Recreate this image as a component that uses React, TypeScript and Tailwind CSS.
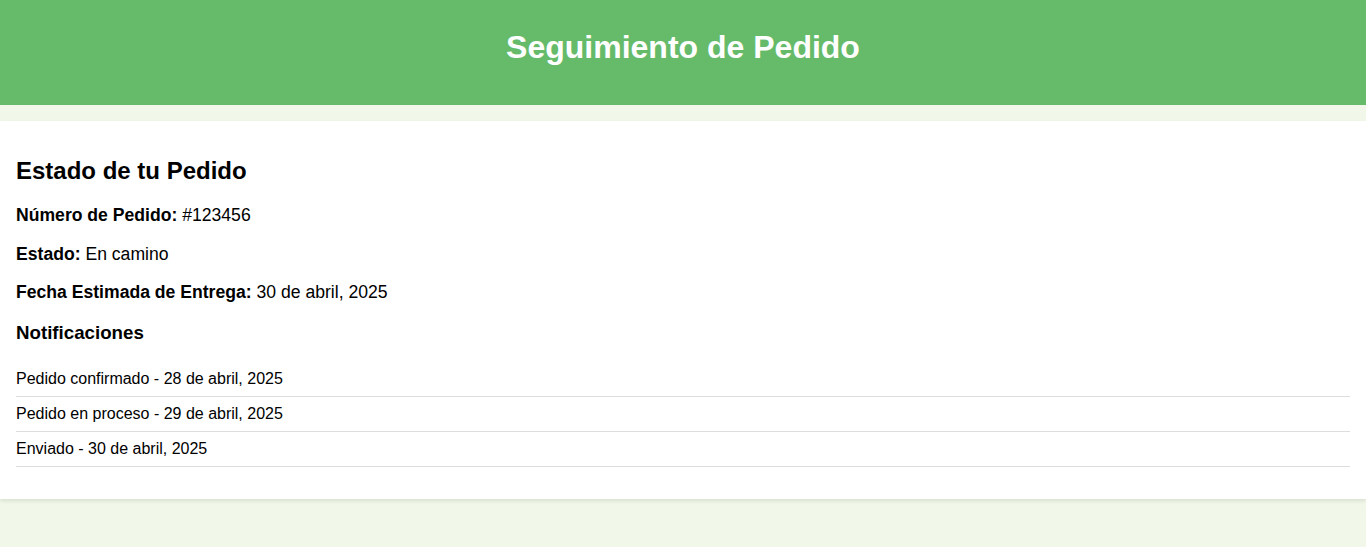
const notifications = [
  'Pedido confirmado - 28 de abril, 2025',
  'Pedido en proceso - 29 de abril, 2025',
  'Enviado - 30 de abril, 2025',
]

export default function App() {
  return (
    <div
      className="min-h-[547px] bg-[#f1f8e9] text-black"
      style={{ fontFamily: '"Liberation Sans", Arial, sans-serif' }}
    >
      {/* Header */}
      <header className="h-[105px] bg-[#66bb6a] pt-[29px] text-center">
        <h1 className="text-[32px] font-bold leading-[36.8px] text-white">
          Seguimiento de Pedido
        </h1>
      </header>

      {/* Order card */}
      <section className="mt-4 flex flex-col bg-white p-4 shadow-[0_2px_4px_rgba(0,0,0,0.1)]">
        <h2 className="mt-[20px] text-[24px] font-bold leading-[27.6px]">
          Estado de tu Pedido
        </h2>
        <p className="mt-[20.4px] text-[17.6px] leading-[21px]">
          <strong>Número de Pedido:</strong> #123456
        </p>
        <p className="mt-[17.6px] text-[17.6px] leading-[21px]">
          <strong>Estado:</strong> En camino
        </p>
        <p className="mt-[17.6px] text-[17.6px] leading-[21px]">
          <strong>Fecha Estimada de Entrega:</strong> 30 de abril, 2025
        </p>

        <h3 className="mt-[18.7px] text-[18.72px] font-bold leading-[21.5px]">
          Notificaciones
        </h3>
        <ul className="mt-[18.4px] mb-[16px]">
          {notifications.map((n) => (
            <li
              key={n}
              className="border-b border-[#dddddd] py-2 text-[16px] leading-[18px]"
            >
              {n}
            </li>
          ))}
        </ul>
      </section>
    </div>
  )
}
